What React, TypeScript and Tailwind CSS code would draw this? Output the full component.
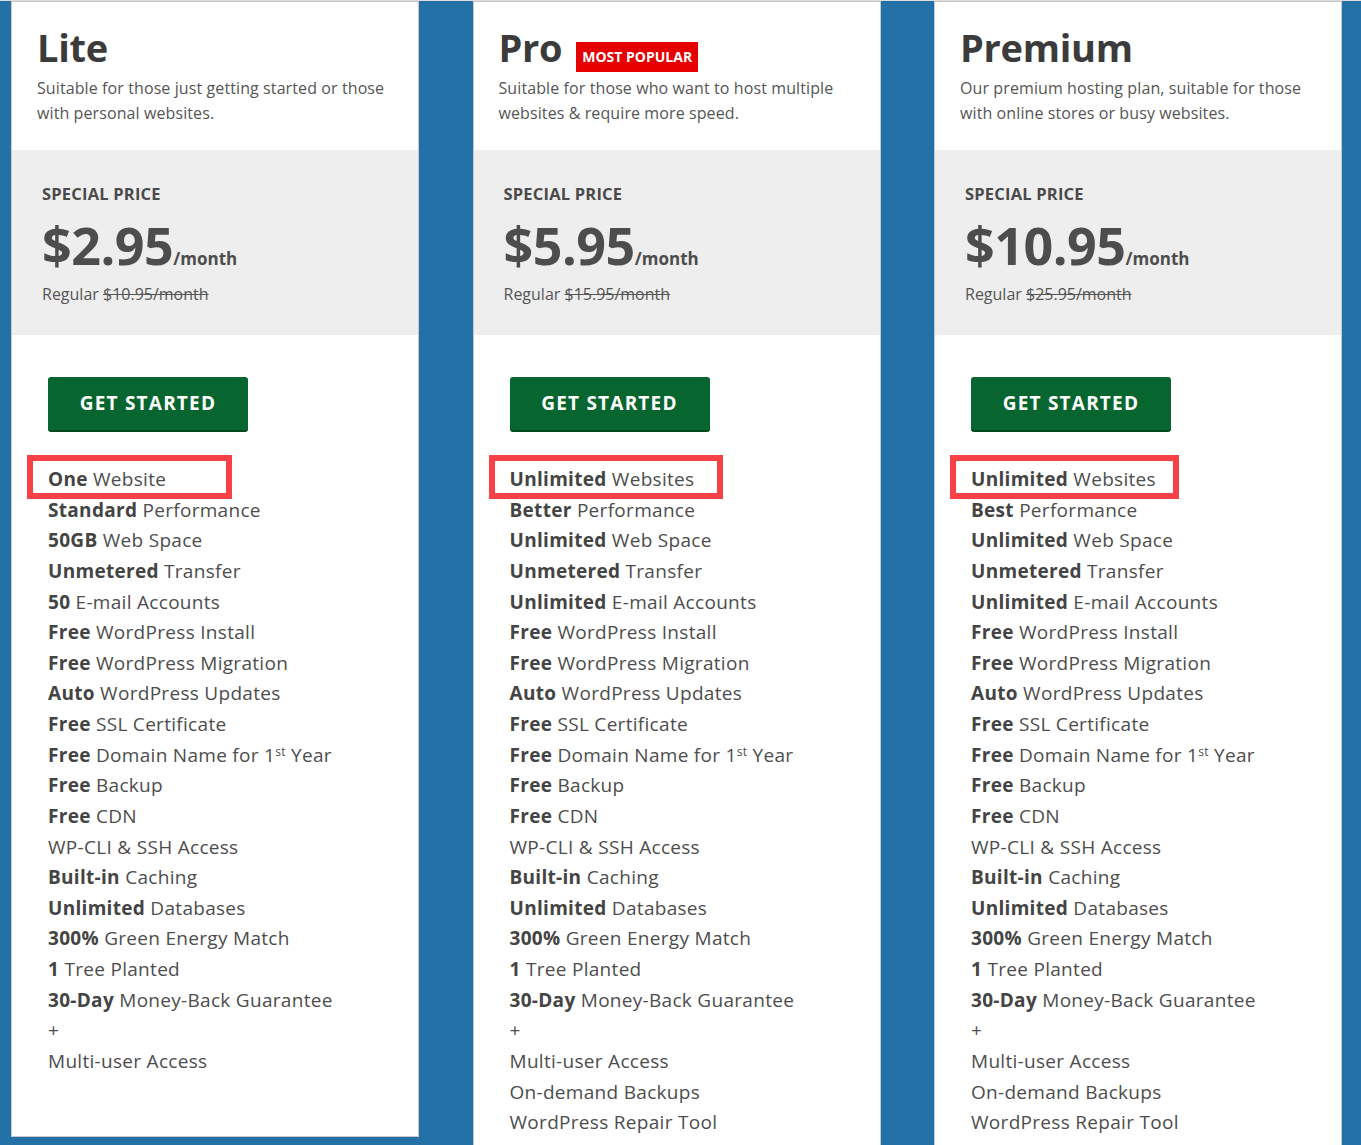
type Feature = { b?: string; t: string; sup?: boolean };

interface Plan {
  name: string;
  popular?: boolean;
  desc: string[];
  price: string;
  regular: string;
  first: string;
  perf: string;
  space: string;
  email: string;
  extras: string[];
  box: string;
}

const plans: Plan[] = [
  {
    name: "Lite",
    desc: ["Suitable for those just getting started or those", "with personal websites."],
    price: "$2.95",
    regular: "$10.95/month",
    first: "One",
    perf: "Standard",
    space: "50GB",
    email: "50",
    extras: ["Multi-user Access"],
    box: "w-[205px]",
  },
  {
    name: "Pro",
    popular: true,
    desc: ["Suitable for those who want to host multiple", "websites & require more speed."],
    price: "$5.95",
    regular: "$15.95/month",
    first: "Unlimited",
    perf: "Better",
    space: "Unlimited",
    email: "Unlimited",
    extras: ["Multi-user Access", "On-demand Backups", "WordPress Repair Tool"],
    box: "w-[234px]",
  },
  {
    name: "Premium",
    desc: ["Our premium hosting plan, suitable for those", "with online stores or busy websites."],
    price: "$10.95",
    regular: "$25.95/month",
    first: "Unlimited",
    perf: "Best",
    space: "Unlimited",
    email: "Unlimited",
    extras: ["Multi-user Access", "On-demand Backups", "WordPress Repair Tool"],
    box: "w-[229px]",
  },
];

function featuresFor(p: Plan): Feature[] {
  return [
    { b: p.first, t: p.first === "One" ? "Website" : "Websites" },
    { b: p.perf, t: "Performance" },
    { b: p.space, t: "Web Space" },
    { b: "Unmetered", t: "Transfer" },
    { b: p.email, t: "E-mail Accounts" },
    { b: "Free", t: "WordPress Install" },
    { b: "Free", t: "WordPress Migration" },
    { b: "Auto", t: "WordPress Updates" },
    { b: "Free", t: "SSL Certificate" },
    { b: "Free", t: "Domain Name for 1", sup: true },
    { b: "Free", t: "Backup" },
    { b: "Free", t: "CDN" },
    { t: "WP-CLI & SSH Access" },
    { b: "Built-in", t: "Caching" },
    { b: "Unlimited", t: "Databases" },
    { b: "300%", t: "Green Energy Match" },
    { b: "1", t: "Tree Planted" },
    { b: "30-Day", t: "Money-Back Guarantee" },
    { t: "+" },
    ...p.extras.map((t) => ({ t })),
  ];
}

function PlanCard({ plan }: { plan: Plan }) {
  return (
    <div className="w-[408px] shrink-0 border border-[#c9c9c9] bg-white">
      {/* Heading */}
      <div className="px-[25px] pt-[19px] pb-[24px]">
        <div className="mb-[3px] flex items-start gap-[14px]">
          <h2 className="text-[38px] font-bold leading-[52px] tracking-[-0.3px] text-[#3b3b3b]">
            {plan.name}
          </h2>
          {plan.popular && (
            <span className="mt-[21px] bg-[#e60000] px-[6px] text-[14px] font-bold leading-[30px] text-white">
              MOST POPULAR
            </span>
          )}
        </div>
        <p className="text-[16px] leading-[25px] tracking-[0.1px] text-[#555]">
          {plan.desc[0]}
          <br />
          {plan.desc[1]}
        </p>
      </div>

      {/* Price */}
      <div className="h-[185px] bg-[#eeeeee] px-[30px] pt-[33px]">
        <div className="text-[16.5px] font-bold leading-[22px] tracking-[0.2px] text-[#4a4a4a]">
          SPECIAL PRICE
        </div>
        <div className="mt-[10px] flex items-baseline text-[#4d4d4d]">
          <span className="text-[52px] font-bold leading-[60px] tracking-[-0.5px]">{plan.price}</span>
          <span className="text-[17px] font-bold">/month</span>
        </div>
        <div className="mt-[8px] text-[16px] leading-[22px] text-[#555]">
          Regular <span className="line-through">{plan.regular}</span>
        </div>
      </div>

      {/* Features */}
      <div className="px-[36px] pt-[42px] pb-[59px]">
        <button className="h-[55px] w-[200px] rounded-[3px] border-b-2 border-[#04481f] bg-[#07662f] text-[19px] font-bold tracking-[1.2px] text-white">
          GET STARTED
        </button>
        <ul className="relative mt-[32px] text-[19px] leading-[30.63px] tracking-[0.3px] text-[#4d4d4d]">
          <span
            className={`absolute left-[-21px] top-[-9px] h-[44px] border-[6px] border-[#f74147] ${plan.box}`}
          />
          {featuresFor(plan).map((f, i) => (
            <li key={i} className="whitespace-nowrap">
              {f.b && <b className="font-bold text-[#444]">{f.b} </b>}
              {f.t}
              {f.sup && (
                <>
                  <sup className="text-[12px]">st</sup> Year
                </>
              )}
            </li>
          ))}
        </ul>
      </div>
    </div>
  );
}

export default function App() {
  return (
    <div
      className="flex min-h-screen items-start gap-[53.5px] border-t border-[#dcdcdc] bg-[#2471a8] pl-[11px]"
      style={{ fontFamily: '"Open Sans", "Noto Sans", sans-serif' }}
    >
      {plans.map((p) => (
        <PlanCard key={p.name} plan={p} />
      ))}
    </div>
  );
}
